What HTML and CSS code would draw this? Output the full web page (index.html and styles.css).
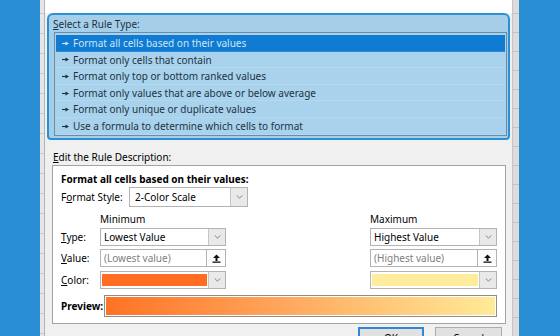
FILE: index.html
```html
<!DOCTYPE html>
<html lang="en">
<head>
    <meta charset="UTF-8">
    <title>New Formatting Rule</title>
    <link rel="stylesheet" href="styles.css">
</head>
<body>
    <div class="sheet-blue"></div>
    <div class="gutter"></div>

    <div class="dialog">
        <div class="titlebar"></div>

        <div class="rule-type">
            <div class="caption"><u>S</u>elect a Rule Type:</div>
            <ul class="rule-list">
                <li class="selected"><svg class="rule-arrow" viewBox="0 0 8 5"><path d="M0 2.5h4.5" /><polygon points="4,0.3 8,2.5 4,4.7" /></svg>Format all cells based on their values</li>
                <li><svg class="rule-arrow" viewBox="0 0 8 5"><path d="M0 2.5h4.5" /><polygon points="4,0.3 8,2.5 4,4.7" /></svg>Format only cells that contain</li>
                <li><svg class="rule-arrow" viewBox="0 0 8 5"><path d="M0 2.5h4.5" /><polygon points="4,0.3 8,2.5 4,4.7" /></svg>Format only top or bottom ranked values</li>
                <li><svg class="rule-arrow" viewBox="0 0 8 5"><path d="M0 2.5h4.5" /><polygon points="4,0.3 8,2.5 4,4.7" /></svg>Format only values that are above or below average</li>
                <li><svg class="rule-arrow" viewBox="0 0 8 5"><path d="M0 2.5h4.5" /><polygon points="4,0.3 8,2.5 4,4.7" /></svg>Format only unique or duplicate values</li>
                <li><svg class="rule-arrow" viewBox="0 0 8 5"><path d="M0 2.5h4.5" /><polygon points="4,0.3 8,2.5 4,4.7" /></svg>Use a formula to determine which cells to format</li>
            </ul>
        </div>

        <div class="caption desc-caption"><u>E</u>dit the Rule Description:</div>

        <div class="desc-panel">
            <div class="heading">Format all cells based on their values:</div>
            <div class="style-row">
                <span class="style-label">F<u>o</u>rmat Style:</span>
                <div class="combo style-combo">
                    <span class="combo-text">2-Color Scale</span>
                    <span class="combo-btn"><svg class="chevron" viewBox="0 0 8 5"><polyline points="0.5,0.5 4,4 7.5,0.5" /></svg></span>
                </div>
            </div>

            <div class="scale-cols scale-head">
                <span></span>
                <span>Minimum</span>
                <span></span>
                <span>Maximum</span>
            </div>

            <div class="scale-cols scale-grid">
                <span class="field-label"><u>T</u>ype:</span>
                <div class="combo">
                    <span class="combo-text">Lowest Value</span>
                    <span class="combo-btn"><svg class="chevron" viewBox="0 0 8 5"><polyline points="0.5,0.5 4,4 7.5,0.5" /></svg></span>
                </div>
                <span></span>
                <div class="combo">
                    <span class="combo-text">Highest Value</span>
                    <span class="combo-btn"><svg class="chevron" viewBox="0 0 8 5"><polyline points="0.5,0.5 4,4 7.5,0.5" /></svg></span>
                </div>

                <span class="field-label"><u>V</u>alue:</span>
                <div class="combo">
                    <span class="combo-text hint">(Lowest value)</span>
                    <span class="pick-btn"><svg class="pick-icon" viewBox="0 0 9 10"><polygon points="4.5,1.5 8,5 1,5" /><rect x="3.5" y="5" width="2" height="3" /><rect x="0.5" y="8.5" width="8" height="1.3" /></svg></span>
                </div>
                <span></span>
                <div class="combo">
                    <span class="combo-text hint">(Highest value)</span>
                    <span class="pick-btn"><svg class="pick-icon" viewBox="0 0 9 10"><polygon points="4.5,1.5 8,5 1,5" /><rect x="3.5" y="5" width="2" height="3" /><rect x="0.5" y="8.5" width="8" height="1.3" /></svg></span>
                </div>

                <span class="field-label"><u>C</u>olor:</span>
                <div class="combo">
                    <span class="swatch min-color"></span>
                    <span class="combo-btn"><svg class="chevron" viewBox="0 0 8 5"><polyline points="0.5,0.5 4,4 7.5,0.5" /></svg></span>
                </div>
                <span></span>
                <div class="combo">
                    <span class="swatch max-color"></span>
                    <span class="combo-btn"><svg class="chevron" viewBox="0 0 8 5"><polyline points="0.5,0.5 4,4 7.5,0.5" /></svg></span>
                </div>
            </div>

            <div class="preview-row">
                <span class="preview-label">Preview:</span>
                <div class="preview-bar"></div>
            </div>
        </div>

        <div class="buttons">
            <button class="btn ok">OK</button>
            <button class="btn">Cancel</button>
        </div>
    </div>

    <div class="gutter right"></div>
    <div class="sheet-blue right"></div>
</body>
</html>
```

FILE: styles.css
```css
* {
    box-sizing: border-box;
}

body {
    margin: 0;
    width: 560px;
    height: 336px;
    overflow: hidden;
    display: flex;
    background-color: #2a8ed5;
    font-family: "Noto Sans", "Open Sans", sans-serif;
    font-size: 10px;
    color: #000;
}

.sheet-blue {
    width: 40px;
    flex: none;
    background-color: #2a8ed5;
}

.sheet-blue.right {
    flex: 1;
}

.gutter {
    width: 5px;
    flex: none;
    background: repeating-linear-gradient(to bottom, #e6e6e6 0 13px, #c9c9c9 13px 14px, #e6e6e6 14px 20px);
    border-right: 1px solid #b4b4b4;
}

.gutter.right {
    width: 7px;
    border-right: none;
    border-left: 1px solid #c4c4c4;
    background: repeating-linear-gradient(to bottom, #dcdcdc 0 13px, #c2c2c2 13px 14px, #dcdcdc 14px 19px);
}

.dialog {
    width: 467px;
    flex: none;
    display: flex;
    flex-direction: column;
    background-color: #f0f0f0;
}

.dialog > * {
    flex-shrink: 0;
}

.titlebar {
    height: 13px;
    background-color: #fff;
}

/* highlighted section */
.rule-type {
    margin: 0 2px;
    border: 2px solid #2b8fd6;
    border-radius: 6px 6px 4px 4px;
    background-color: #a5cfe9;
    padding: 1px 1px 2px 4px;
    color: #1d3245;
}

.caption {
    line-height: 16px;
}

.rule-list {
    list-style: none;
    margin: 0 0 0 1px;
    padding: 2px 1px 0;
    border: 1px solid #6d8ca3;
    background-color: #a9d3ec;
}

.rule-list li {
    height: 16.6px;
    line-height: 16.6px;
    padding-left: 6px;
    display: flex;
    align-items: center;
    white-space: nowrap;
    box-shadow: inset 0 -1px 0 rgba(255, 255, 255, 0.12);
}

.rule-list li.selected {
    background-color: #0f7bd3;
    color: #cfe5f6;
}

.rule-arrow {
    width: 7px;
    height: 5px;
    margin-right: 4px;
    flex: none;
}

.rule-arrow path {
    stroke: currentColor;
    stroke-width: 1.3;
}

.rule-arrow polygon {
    fill: currentColor;
}

.desc-caption {
    margin-top: 9px;
    padding-left: 8px;
}

.desc-panel {
    margin: 0 6px 0 7px;
    border: 1px solid #a3a3a3;
    background-color: #fff;
    padding: 6px 8px 6px 8px;
}

.heading {
    font-weight: bold;
    line-height: 14px;
}

.style-row {
    display: flex;
    align-items: center;
    margin-top: 1px;
}

.style-label {
    width: 68px;
}

.combo {
    display: flex;
    height: 18px;
    border: 1px solid #b3b3b3;
    background-color: #fff;
}

.style-combo {
    width: 119px;
    height: 20px;
}

.combo-text {
    flex: 1;
    padding-left: 3px;
    line-height: 16px;
    white-space: nowrap;
}

.style-combo .combo-text {
    padding-left: 5px;
    line-height: 18px;
}

.combo-text.hint {
    color: #808080;
}

.combo-btn {
    width: 17px;
    flex: none;
    display: flex;
    align-items: center;
    justify-content: center;
    background-color: #e9e9e9;
    border-left: 1px solid #c6c6c6;
}

.chevron {
    width: 7px;
    height: 4px;
}

.chevron polyline {
    fill: none;
    stroke: #6a6a6a;
    stroke-width: 1;
}

.pick-btn {
    width: 19px;
    flex: none;
    display: flex;
    align-items: center;
    justify-content: center;
    border-left: 1px solid #b3b3b3;
    background-color: #fdfdfd;
}

.pick-icon {
    width: 9px;
    height: 10px;
    fill: #111;
}

.swatch {
    flex: 1;
    margin: 2px 1px 2px 1px;
}

.min-color {
    background-color: #ff6d22;
}

.max-color {
    background-color: #ffeb9c;
}

.scale-cols {
    display: grid;
    grid-template-columns: 39px 126px 1fr 127px;
}

.scale-head {
    margin-top: 5px;
    line-height: 14px;
}

.scale-grid {
    margin-top: 2px;
    row-gap: 3.5px;
    grid-auto-rows: 18px;
    align-items: center;
}

.field-label {
    line-height: 18px;
}

.preview-row {
    display: flex;
    align-items: center;
    margin-top: 6px;
}

.preview-label {
    width: 43px;
    font-weight: bold;
}

.preview-bar {
    flex: 1;
    height: 22px;
    border: 1px solid #8d8d8d;
    background: linear-gradient(to right, #ff7224, #ffa65c 45%, #ffeb98);
    box-shadow: inset 0 0 0 1px #fff;
}

.buttons {
    display: flex;
    justify-content: flex-end;
    gap: 11px;
    margin-top: 3px;
    padding-right: 10px;
}

.btn {
    width: 67px;
    height: 22px;
    font-family: inherit;
    font-size: 10px;
    background-color: #e1e1e1;
    border: 1px solid #adadad;
    padding: 0;
}

.btn.ok {
    width: 66px;
    border: 2px solid #3385d6;
}
```
